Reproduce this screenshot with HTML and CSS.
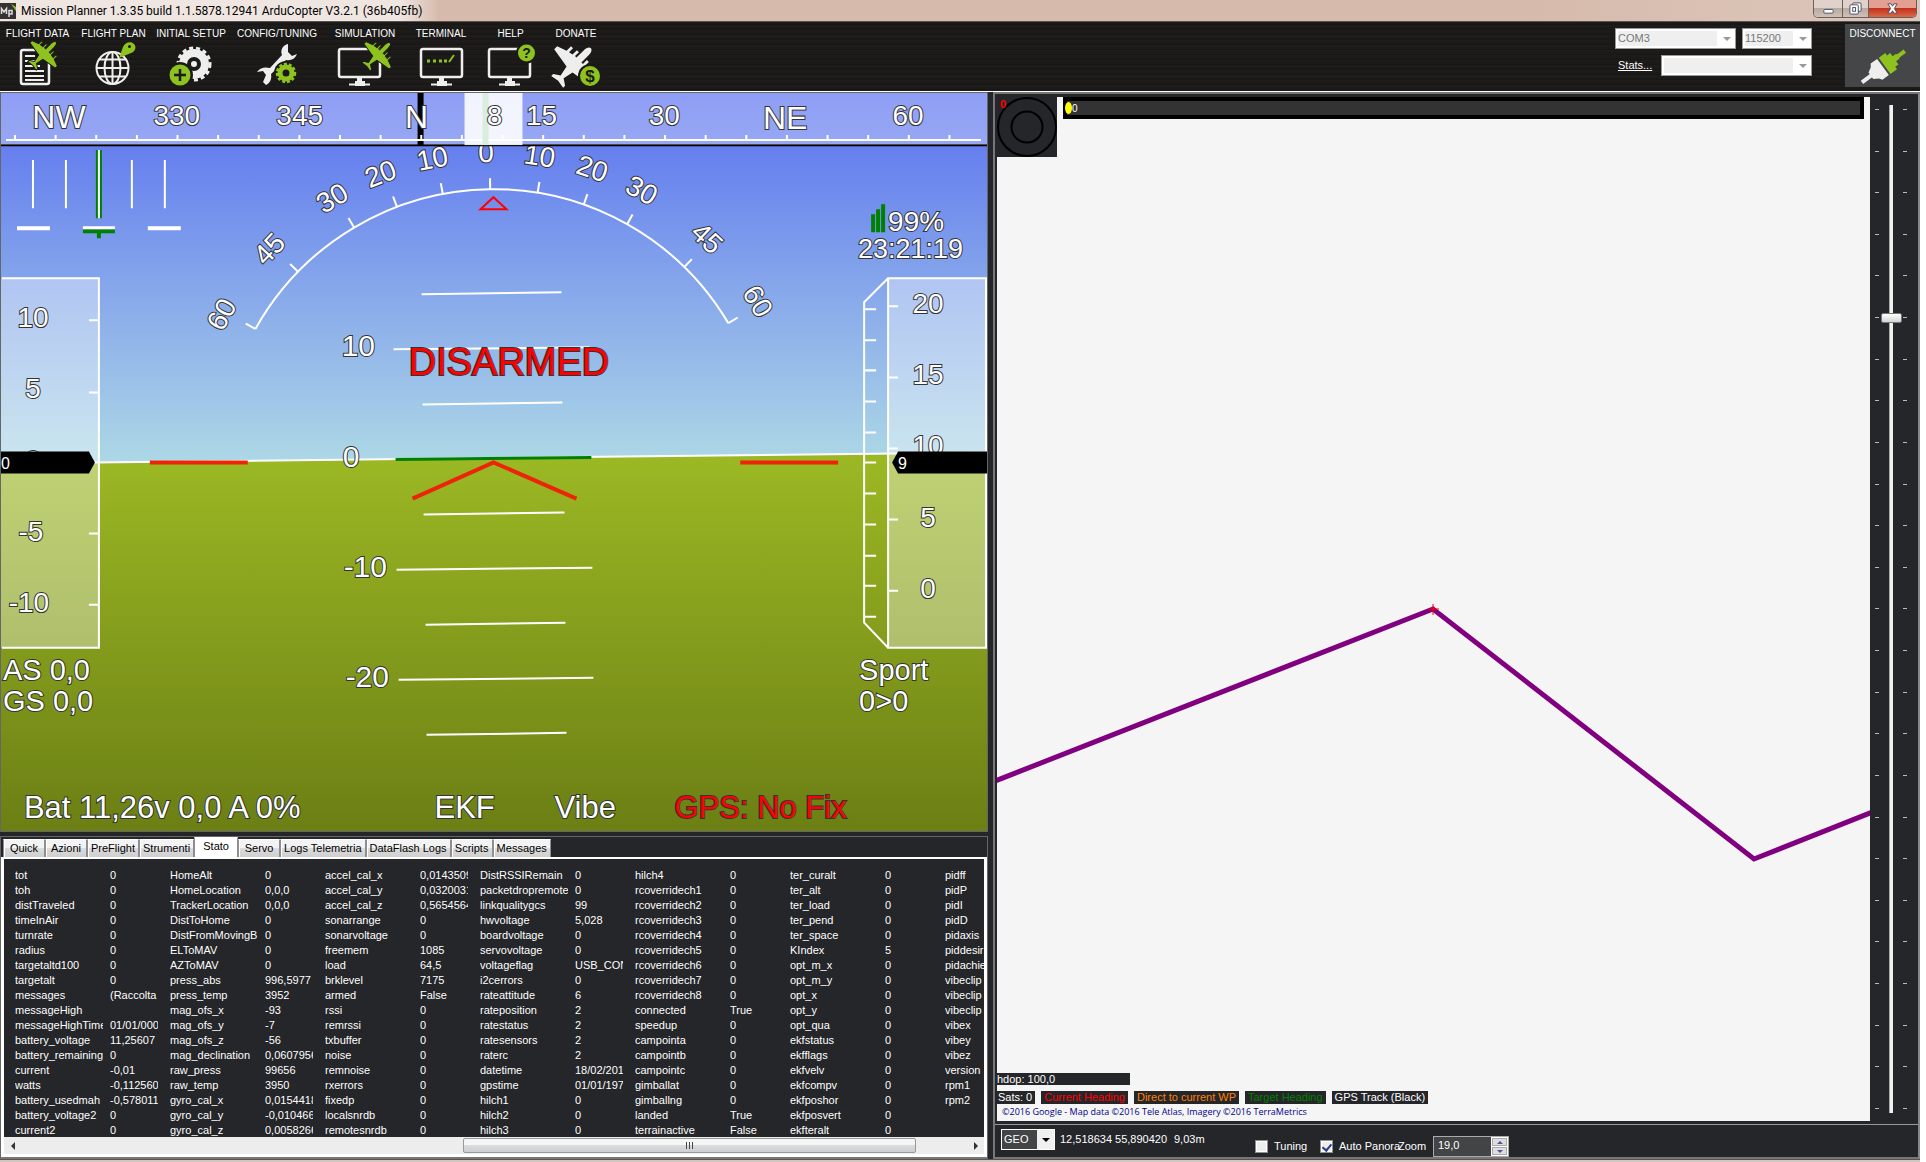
FILE: index.html
```html
<!DOCTYPE html>
<html lang="it">
<head>
<meta charset="utf-8">
<title>Mission Planner</title>
<link rel="stylesheet" href="styles.css">
</head>
<body>
<svg class="defs" aria-hidden="true">
  <defs>
    <path id="plane" d="M0-17C1.500-17 2.500-15 2.500-12V-5L4-5V-9H6V-4.500L9-4V-8H11V-3.500L18-1V2L3 4.500L1.500 12L6 15V17L0 16L-6 17V15L-1.500 12L-3 4.500L-18 2V-1L-11-3.500V-8H-9V-4L-6-4.500V-9H-4V-5H-2.500V-12C-2.500-15-1.500-17 0-17Z"/>
    <g id="monitor" fill="none" stroke="#eee" stroke-width="2.500"><rect x="1" y="1" width="41" height="28" rx="2"/><path d="M17 35.500h10M21.500 30v5" stroke-width="5"/><path d="M11 36.500h21" stroke-width="2"/></g>
  </defs>
</svg>

<header class="titlebar">
  <svg class="app-icon" viewBox="0 0 16 16"><rect width="16" height="16" fill="#333"/><path d="M1.500 11V5.500L4 9l2.500-3.500V11M9 14V7.500h3v3.500H9" fill="none" stroke="#ddd" stroke-width="1.500"/><path d="M11 1l5 7V4z" fill="#8dc21f"/></svg>
  <h1>Mission Planner 1.3.35 build 1.1.5878.12941 ArduCopter V3.2.1 (36b405fb)</h1>
  <div class="winbtns">
    <button class="wb min" aria-label="Minimize"><svg viewBox="0 0 14 14"><rect x="2" y="8" width="10" height="4" rx="1"/></svg></button>
    <button class="wb max" aria-label="Restore"><svg viewBox="0 0 14 14"><rect x="4" y="1" width="9" height="9" rx="1"/><rect x="1" y="3" width="9" height="10" rx="1"/><rect x="4" y="6" width="3" height="4"/></svg></button>
    <button class="wb close" aria-label="Close"><svg viewBox="0 0 14 14"><path d="M2 2h3.500L7 4.500 8.500 2H12L9 7l3 5H8.500L7 9.500 5.500 12H2l3-5z"/></svg></button>
  </div>
</header>

<nav class="menubar">
  <div class="menu">
    <button>FLIGHT DATA
      <svg viewBox="7 39 60 50"><rect x="20" y="49" width="28" height="34" rx="2" fill="none" stroke="#eee" stroke-width="2.500"/><path d="M24 55h10M24 60h12M24 65h15M24 70h19M24 75h19M24 79h19" stroke="#eee" stroke-width="2"/><use href="#plane" transform="translate(43 53) rotate(45)" fill="#8dc21f" stroke="#1b1a19" stroke-width="1"/></svg></button>
    <button>FLIGHT PLAN
      <svg viewBox="83 39 60 50"><g fill="none" stroke="#eee" stroke-width="2"><circle cx="111.500" cy="67" r="16"/><ellipse cx="111.500" cy="67" rx="8" ry="16"/><path d="M111.500 51v32M96 67h31M98 58.500h27M98 75.500h27"/></g><path d="M118 57l4-11c2-5 8-6 11-3s1 8-3 9z" fill="#8dc21f"/><circle cx="128.500" cy="45.500" r="1.500" fill="#1b1a19"/></svg></button>
    <button>INITIAL SETUP
      <svg viewBox="161 39 60 50"><circle cx="194" cy="63" r="11" fill="none" stroke="#eee" stroke-width="8"/><circle cx="194" cy="63" r="16" fill="none" stroke="#eee" stroke-width="3" stroke-dasharray="4 3"/><circle cx="194" cy="63" r="3" fill="#eee"/><circle cx="180" cy="74" r="13" fill="#1b1a19"/><circle cx="180" cy="74" r="10.500" fill="#8dc21f"/><path d="M180 68v12M174 74h12" stroke="#1b1a19" stroke-width="2.500"/></svg></button>
    <button>CONFIG/TUNING
      <svg viewBox="247 39 60 50"><path d="M288 43c-5 1-8 6-6 11L270 67c-5-1-9-1-13 4l6-1 3 4-3 7 3 3c4-2 6-6 5-11L286 59c5 1 9-1 11-6l-5 2-4-4z" fill="#eee"/><circle cx="286" cy="72" r="12" fill="#1b1a19"/><circle cx="286" cy="72" r="6" fill="none" stroke="#8dc21f" stroke-width="5"/><circle cx="286" cy="72" r="9" fill="none" stroke="#8dc21f" stroke-width="2.500" stroke-dasharray="3 2"/></svg></button>
    <button>SIMULATION
      <svg viewBox="335 39 60 50"><use href="#monitor" x="338" y="47"/><use href="#plane" transform="translate(378 54) rotate(45)" fill="#8dc21f" stroke="#1b1a19" stroke-width="1"/></svg></button>
    <button>TERMINAL
      <svg viewBox="411 39 60 50"><use href="#monitor" x="420" y="47"/><path d="M427 60h3M433 60h3M439 60h3M444 60h3" stroke="#8dc21f" stroke-width="3"/><path d="M449 61l5-7" stroke="#8dc21f" stroke-width="2"/></svg></button>
    <button>HELP
      <svg viewBox="480 39 60 50"><use href="#monitor" x="487" y="47"/><circle cx="525.500" cy="52" r="10.500" fill="#1b1a19"/><circle cx="525.500" cy="52" r="8.500" fill="#8dc21f"/><text class="badge" x="525.500" y="57">?</text></svg></button>
    <button>DONATE
      <svg viewBox="546 39 60 50"><use href="#plane" transform="translate(574 64) rotate(45) scale(1.400)" fill="#eee"/><circle cx="590" cy="75" r="12" fill="#1b1a19"/><circle cx="590" cy="75" r="10" fill="#8dc21f"/><text class="badge dollar" x="590" y="81">$</text></svg></button>
  </div>
  <div class="conn">
    <span class="combo port"><select aria-label="Port" disabled><option>COM3</option></select></span>
    <span class="combo baud"><select aria-label="Baud rate" disabled><option>115200</option></select></span>
    <a href="#stats">Stats...</a>
    <span class="combo link"><select aria-label="Link" disabled><option></option></select></span>
  </div>
  <button class="disconnect">DISCONNECT
    <svg viewBox="0 0 60 50"><g transform="translate(30 27) rotate(-36)"><path d="M-26-2h12v4h-12z" fill="#eee"/><path d="M-15-4l5-3 2-3H0V10H-8l-2-3-5-3z" fill="#eee"/><path d="M2-10h8v3h4v4h4l1 1h8v4h-8l-1 1h-4v4h-4v3H2z" fill="#8dc21f"/></g></svg></button>
</nav>

<main>
<div class="left">
  <section class="hud" aria-label="HUD">
  <svg viewBox="1 93 987 737" preserveAspectRatio="none">
    <defs>
      <linearGradient id="sky" gradientUnits="userSpaceOnUse" x1="0" y1="93" x2="0" y2="462"><stop offset="0" stop-color="#5a70f0"/><stop offset="1" stop-color="#add8e6"/></linearGradient>
      <linearGradient id="ground" gradientUnits="userSpaceOnUse" x1="0" y1="458" x2="0" y2="830"><stop offset="0" stop-color="#9bb824"/><stop offset="1" stop-color="#6b7f14"/></linearGradient>
    </defs>
    <path d="M0 90H990V453L0 464Z" fill="url(#sky)"/>
    <path d="M0 463L990 452V832H0Z" fill="url(#ground)"/>
    <path d="M0 463L990 452" stroke="#fff" stroke-width="2"/>

    <g class="line">
      <path d="M422 294L562 292M394 349L590 347M423 404L563 402M424 514L565 512M397 569L593 567M426 624L566 622M399 679L594 677M427 734L567 732"/>
      <path d="M396 459L592 457" stroke="#008000" stroke-width="3"/>
    </g>
    <g class="t30">
      <text x="342" y="356">10</text><text x="343" y="466">0</text><text x="344" y="576">-10</text><text x="346" y="686">-20</text>
    </g>

    <g transform="rotate(-0.700 494 462.400)">
      <path class="arc" d="M257.300 325.700A273.300 273.300 0 0 1 730.700 325.700"/>
      <g class="arc">
        <path id="tk" d="M494 189v-11"/>
        <use href="#tk" transform="rotate(-60 494 462.400)"/><use href="#tk" transform="rotate(-45 494 462.400)"/><use href="#tk" transform="rotate(-30 494 462.400)"/><use href="#tk" transform="rotate(-20 494 462.400)"/><use href="#tk" transform="rotate(-10 494 462.400)"/>
        <use href="#tk" transform="rotate(60 494 462.400)"/><use href="#tk" transform="rotate(45 494 462.400)"/><use href="#tk" transform="rotate(30 494 462.400)"/><use href="#tk" transform="rotate(20 494 462.400)"/><use href="#tk" transform="rotate(10 494 462.400)"/>
      </g>
    </g>
    <g class="t28 mid" transform="rotate(-1.400 494 462.400)">
      <text x="494" y="162">0</text>
      <text x="494" y="162" transform="rotate(-10 494 462.400)">10</text>
      <text x="494" y="162" transform="rotate(-20 494 462.400)">20</text>
      <text x="494" y="162" transform="rotate(-30 494 462.400)">30</text>
      <text x="494" y="162" transform="rotate(-45 494 462.400)">45</text>
      <text x="494" y="162" transform="rotate(-60 494 462.400)">60</text>
      <text x="494" y="162" transform="rotate(10 494 462.400)">10</text>
      <text x="494" y="162" transform="rotate(20 494 462.400)">20</text>
      <text x="494" y="162" transform="rotate(30 494 462.400)">30</text>
      <text x="494" y="162" transform="rotate(45 494 462.400)">45</text>
      <text x="494" y="162" transform="rotate(60 494 462.400)">60</text>
    </g>
    <path d="M494 197L507 209H481Z" fill="none" stroke="#f00" stroke-width="2"/>

    <!-- heading tape -->
    <rect x="0" y="92" width="990" height="54" fill="url(#sky)"/>
    <rect x="0" y="92" width="990" height="53" fill="#fff" fill-opacity=".32"/>
    <path d="M0 144.500H988" stroke="#666" stroke-width="1"/>
    <path d="M0 145.500H988" stroke="#000" stroke-width="1.500"/>
    <rect x="418" y="93" width="6" height="52"/>
    <g class="line">
      <path d="M6 140H982" />
      <path d="M14 137.500H982" stroke-width="5" stroke-dasharray="2 38.670"/>
    </g>
    <rect x="465" y="93" width="58" height="52" fill="#fff" fill-opacity=".88"/>
    <rect x="483" y="93" width="6" height="52" fill="#d9eedd"/>
    <g class="t32 mid"><text x="59" y="128">NW</text><text x="417" y="128">N</text><text x="786" y="129">NE</text></g>
    <g class="t28 mid"><text x="177" y="125">330</text><text x="300" y="125">345</text><text x="495" y="125">8</text><text x="542" y="125">15</text><text x="665" y="125">30</text><text x="909" y="125">60</text></g>

    <!-- vibration / slip -->
    <g class="line"><path d="M33 160v48M66 160v48M132 160v48M165 160v48"/></g>
    <path d="M96 150h6v68h-6zM83 229h32v4H83zM97 233h4v5h-4z" fill="#008000"/>
    <path d="M98 150h2v68h-2zM17 226h33v4H17zM148 226h33v4h-33zM83 226h32v3H83z" fill="#fff"/>

    <!-- speed tape -->
    <rect x="0" y="278" width="99" height="369" fill="#fff" fill-opacity=".36"/>
    <g class="line"><path d="M2 278H99V647H2M89 320H99M89 392H99M89 533H99M89 604H99"/></g>
    <g class="t28 mid"><text x="33" y="327">10</text><text x="33" y="398">5</text><text x="33" y="469">0</text><text x="31" y="540">-5</text><text x="29" y="611">-10</text></g>
    <path d="M0 451H89L95 462L89 473H0Z"/>
    <text class="small" x="1" y="468">0</text>

    <!-- altitude tape -->
    <rect x="889" y="278" width="98" height="369" fill="#fff" fill-opacity=".36"/>
    <g class="line">
      <path d="M987 278H889V647H987ZM889 278L865 302V622L889 647"/>
      <path d="M865 309h12M865 340h12M865 370h12M865 401h12M865 432h12M865 462h12M865 493h12M865 524h12M865 555h12M865 585h12M865 616h12M889 306h10M889 377h10M889 448h10M889 519h10M889 590h10"/>
    </g>
    <g class="t28 mid"><text x="929" y="313">20</text><text x="929" y="384">15</text><text x="929" y="455">10</text><text x="929" y="526">5</text><text x="929" y="597">0</text></g>
    <path d="M988 451H899L893 462L899 473H988Z"/>
    <text class="small" x="899" y="468">9</text>

    <path d="M150 460h98v4h-98zM741 460h98v4h-98z" fill="#ee2408"/>
    <path d="M413 498L494 462L577 498" fill="none" stroke="#ee2408" stroke-width="4"/>

    <path d="M872 214h4v18h-4zM877 209h4v23h-4zM882 204h4v28h-4z" fill="#008000"/>
    <g class="t28"><text x="889" y="231">99%</text></g>
    <g class="t27"><text x="859" y="258">23:21:19</text></g>
    <g class="t29"><text x="3" y="679">AS 0,0</text><text x="3" y="710">GS 0,0</text><text x="860" y="679">Sport</text><text x="860" y="710">0&gt;0</text></g>
    <g class="t31"><text x="24" y="817">Bat 11,26v 0,0 A 0%</text><text x="435" y="817">EKF</text><text x="555" y="817">Vibe</text><text class="alert" x="675" y="817">GPS: No Fix</text></g>
    <text class="t38 alert" x="409" y="375">DISARMED</text>
  </svg>
  </section>

  <section class="tabs">
    <div class="tablist" role="tablist">
      <button role="tab">Quick</button><button role="tab">Azioni</button><button role="tab">PreFlight</button><button role="tab">Strumenti</button><button role="tab" class="on" aria-selected="true">Stato</button><button role="tab">Servo</button><button role="tab">Logs Telemetria</button><button role="tab">DataFlash Logs</button><button role="tab">Scripts</button><button role="tab">Messages</button>
    </div>
    <div class="panel" role="tabpanel">
      <div class="clip">
      <table>
        <colgroup><col class="n"><col class="v"><col class="n"><col class="v"><col class="n"><col class="v"><col class="n"><col class="v"><col class="n"><col class="v"><col class="n"><col class="v"><col class="n"></colgroup>
        <tr><th>tot<td>0<th>HomeAlt<td>0<th>accel_cal_x<td>0,0143509<th>DistRSSIRemain<td>0<th>hilch4<td>0<th>ter_curalt<td>0<th>pidff
        <tr><th>toh<td>0<th>HomeLocation<td>0,0,0<th>accel_cal_y<td>0,0320031<th>packetdropremote<td>0<th>rcoverridech1<td>0<th>ter_alt<td>0<th>pidP
        <tr><th>distTraveled<td>0<th>TrackerLocation<td>0,0,0<th>accel_cal_z<td>0,5654564<th>linkqualitygcs<td>99<th>rcoverridech2<td>0<th>ter_load<td>0<th>pidI
        <tr><th>timeInAir<td>0<th>DistToHome<td>0<th>sonarrange<td>0<th>hwvoltage<td>5,028<th>rcoverridech3<td>0<th>ter_pend<td>0<th>pidD
        <tr><th>turnrate<td>0<th>DistFromMovingB<td>0<th>sonarvoltage<td>0<th>boardvoltage<td>0<th>rcoverridech4<td>0<th>ter_space<td>0<th>pidaxis
        <tr><th>radius<td>0<th>ELToMAV<td>0<th>freemem<td>1085<th>servovoltage<td>0<th>rcoverridech5<td>0<th>KIndex<td>5<th>piddesir
        <tr><th>targetaltd100<td>0<th>AZToMAV<td>0<th>load<td>64,5<th>voltageflag<td>USB_CON<th>rcoverridech6<td>0<th>opt_m_x<td>0<th>pidachie
        <tr><th>targetalt<td>0<th>press_abs<td>996,5977<th>brklevel<td>7175<th>i2cerrors<td>0<th>rcoverridech7<td>0<th>opt_m_y<td>0<th>vibeclip
        <tr><th>messages<td>(Raccolta<th>press_temp<td>3952<th>armed<td>False<th>rateattitude<td>6<th>rcoverridech8<td>0<th>opt_x<td>0<th>vibeclip
        <tr><th>messageHigh<td><th>mag_ofs_x<td>-93<th>rssi<td>0<th>rateposition<td>2<th>connected<td>True<th>opt_y<td>0<th>vibeclip
        <tr><th>messageHighTime<td>01/01/000<th>mag_ofs_y<td>-7<th>remrssi<td>0<th>ratestatus<td>2<th>speedup<td>0<th>opt_qua<td>0<th>vibex
        <tr><th>battery_voltage<td>11,25607<th>mag_ofs_z<td>-56<th>txbuffer<td>0<th>ratesensors<td>2<th>campointa<td>0<th>ekfstatus<td>0<th>vibey
        <tr><th>battery_remaining<td>0<th>mag_declination<td>0,0607956<th>noise<td>0<th>raterc<td>2<th>campointb<td>0<th>ekfflags<td>0<th>vibez
        <tr><th>current<td>-0,01<th>raw_press<td>99656<th>remnoise<td>0<th>datetime<td>18/02/201<th>campointc<td>0<th>ekfvelv<td>0<th>version
        <tr><th>watts<td>-0,112560<th>raw_temp<td>3950<th>rxerrors<td>0<th>gpstime<td>01/01/197<th>gimballat<td>0<th>ekfcompv<td>0<th>rpm1
        <tr><th>battery_usedmah<td>-0,578011<th>gyro_cal_x<td>0,0154418<th>fixedp<td>0<th>hilch1<td>0<th>gimballng<td>0<th>ekfposhor<td>0<th>rpm2
        <tr><th>battery_voltage2<td>0<th>gyro_cal_y<td>-0,010466<th>localsnrdb<td>0<th>hilch2<td>0<th>landed<td>True<th>ekfposvert<td>0<th>
        <tr><th>current2<td>0<th>gyro_cal_z<td>0,0058266<th>remotesnrdb<td>0<th>hilch3<td>0<th>terrainactive<td>False<th>ekfteralt<td>0<th>
      </table>
      </div>
      <div class="hscroll"><span class="arrow l"></span><div class="rail"><div class="thumb"><i></i><i></i><i></i></div></div><span class="arrow r"></span></div>
    </div>
  </section>
</div>

<div class="right">
  <div class="maprow">
    <section class="map" aria-label="Map">
      <svg class="track" viewBox="997 97 873 1024" preserveAspectRatio="none"><path d="M990 783L1433 609L1754 859L1875 811" fill="none" stroke="#800080" stroke-width="5"/><path d="M1433 604v11M1428 609h11" stroke="#f00" stroke-width="1"/></svg>
      <div class="maptop">
        <svg class="wind" viewBox="0 0 60 60"><rect width="60" height="60" fill="#252629"/><circle cx="30" cy="30" r="29" fill="none" stroke="#000" stroke-width="2"/><circle cx="30" cy="30" r="15.500" fill="none" stroke="#000" stroke-width="2"/><text x="3" y="11">0</text></svg>
        <div class="dist"><span class="mark"></span><span>0</span></div>
      </div>
      <div class="mapbot">
        <p class="hdop">hdop: 100,0</p>
        <p class="legend"><span>Sats: 0</span><span class="red">Current Heading</span><span class="orange">Direct to current WP</span><span class="green">Target Heading</span><span>GPS Track (Black)</span></p>
        <p class="copy">©2016 Google - Map data ©2016 Tele Atlas, Imagery ©2016 TerraMetrics</p>
      </div>
    </section>
    <div class="zoombar"><input type="range" aria-label="Map zoom" min="0" max="24" value="19"></div>
  </div>
  <footer class="controls">
    <span class="combo geo"><select aria-label="Coordinate system"><option>GEO</option></select></span>
    <output class="coord">12,518634 55,890420</output><output class="alt">9,03m</output>
    <label class="chk tuning"><input type="checkbox">Tuning</label>
    <label class="chk auto"><input type="checkbox" checked><span>Auto Panora</span></label>
    <label class="zl" for="zoom">Zoom</label>
    <span class="spin"><input id="zoom" type="text" value="19,0"><span class="ud"><button aria-label="Zoom up"></button><button class="dn" aria-label="Zoom down"></button></span></span>
  </footer>
</div>
</main>
<div class="under"></div>
</body>
</html>
```
FILE: styles.css
```css
* { box-sizing: border-box; }
body {
  margin: 0; height: 100vh; padding-right: 6px; background: #fff; overflow: hidden;
  display: flex; flex-direction: column;
  font: 11px/15px "Liberation Sans", Arial, sans-serif; color: #fff;
}
button, select, input { font: inherit; color: inherit; margin: 0; border-radius: 0; }
button { border: 0; padding: 0; background: none; }
p, h1 { margin: 0; }
svg { display: block; }
.defs { position: absolute; width: 0; height: 0; }

.titlebar {
  flex: none; height: 22px; display: flex; align-items: flex-start; padding-right: 3px;
  background: linear-gradient(90deg, #efe6e1 0, #efe6e1 400px, #d6baab 440px, #d6baab 1500px, #dcc7bb 100%);
  border-bottom: 1px solid #5c5350;
}
.app-icon { width: 16px; height: 16px; margin-top: 3px; }
h1 { flex: 1; padding: 2px 0 0 5px; font: 12px/18px Roboto, "Noto Sans", sans-serif; color: #000; }
.winbtns { display: flex; height: 18px; border: 1px solid #6b5f5b; border-top: 0; border-radius: 0 0 5px 5px; overflow: hidden; }
.wb { display: flex; align-items: center; justify-content: center; background: linear-gradient(#e0d2ca 0 45%, #b8a9a1 50%, #cfc0b8); border-right: 1px solid #6b5f5b; }
.wb svg { width: 13px; height: 13px; fill: #fff; stroke: #444c5c; stroke-width: 1; }
.min { width: 29px; }
.max { width: 26px; }
.close { width: 47px; border: 0; background: linear-gradient(#e3a092 0 45%, #c4321a 50%, #d9684c); }

.menubar {
  flex: none; height: 69px; display: flex; padding: 2px 0 4px;
  background: repeating-linear-gradient(#1b1a19 0 2px, #181716 2px 3px, #1e1c1a 3px 5px);
}
.menu { display: grid; grid-template-columns: 75px 77px 78px 94px 82px 70px 69px 62px; flex: 1; }
.menu button, .disconnect { display: flex; flex-direction: column; align-items: center; font-size: 10px; line-height: 12px; padding-top: 4px; white-space: nowrap; }
.menu svg, .disconnect svg { width: 60px; height: 50px; flex: none; }
.badge { font: bold 14px "Liberation Sans", Arial, sans-serif; fill: #1b1a19; text-anchor: middle; }
.dollar { font-size: 17px; }
.conn { display: grid; grid-template-columns: 40px 75px 70px; column-gap: 6px; row-gap: 6px; align-content: start; margin-right: 33px; padding-top: 4px; }
.conn .port { grid-column: 1 / 3; }
.conn .baud { grid-column: 3; }
.conn .link { grid-column: 2 / 4; }
.conn a { color: #fff; padding: 3px 0 0 3px; }
.combo { position: relative; display: block; height: 21px; }
.combo select { appearance: none; width: 100%; height: 100%; border: 1px solid #999; padding: 0 2px; opacity: 1; color: #777; background: linear-gradient(#efefef, #efefef) no-repeat 2px 2px / calc(100% - 20px) 15px #fff; }
.combo::after { content: ""; position: absolute; right: 5px; top: 9px; border: 4px solid transparent; border-top-color: #999; border-bottom: 0; }
.disconnect { width: 75px; background: #454648; }

main { flex: 1; display: grid; grid-template-columns: 991fr 929fr; grid-template-rows: minmax(0, 1fr); background: #252629; border-top: 1px solid #fff; min-height: 0; }
.left { display: flex; flex-direction: column; min-width: 0; min-height: 0; padding-right: 3px; }
.hud { flex: 1; min-height: 0; border: 1px solid #666; position: relative; }
.hud > svg { position: absolute; inset: 0; width: 100%; height: 100%; font-family: "Liberation Sans", Arial, sans-serif; }
.line { fill: none; stroke: #fff; stroke-width: 2; }
.arc { fill: none; stroke: #fff; stroke-width: 2; }
.hud text { fill: #fff; stroke: #333; stroke-width: 2px; paint-order: stroke; }
.hud .small { font-size: 16px; stroke: none; }
.hud .alert { fill: #f00; }
.mid { text-anchor: middle; }
.t27 { font-size: 27px; }
.t28 { font-size: 28px; }
.t29 { font-size: 29px; }
.t30 { font-size: 30px; }
.t31 { font-size: 31px; }
.t32 { font-size: 32px; }
.t38 { font-size: 38px; }

.tabs { flex: none; margin-top: 4px; border: 1px solid #666; border-bottom: 2px solid #777; }
.tablist { height: 20px; display: flex; align-items: flex-end; padding-left: 2px; }
.tablist button { height: 18px; min-width: 42px; padding: 0 3px; color: #000; white-space: nowrap; background: linear-gradient(#f3f3f3 0 45%, #dcdcdc 50%, #cfcfcf); border: 1px solid #8c8e94; border-top-color: #fff; border-bottom: 0; box-shadow: inset 1px 0 #fff; }
.tablist .on { height: 20px; min-width: 44px; padding-bottom: 3px; background: #fff; }
.panel { border: 3px solid #fff; border-top-width: 2px; }
.clip { height: 278px; padding: 9px 0 0 11px; overflow: hidden; }
table { table-layout: fixed; width: 1025px; border-collapse: separate; border-spacing: 0; }
.n { width: 95px; }
.v { width: 60px; }
th, td { height: 15px; padding: 0; font-weight: normal; text-align: left; line-height: 15px; white-space: nowrap; overflow: hidden; border-right: 7px solid transparent; }
td { border-right-width: 12px; }
.hscroll { height: 17px; display: flex; align-items: center; background: #ededed; color: #333; }
.arrow { width: 17px; display: flex; justify-content: center; }
.arrow::before { content: ""; border: 4px solid transparent; border-left: 0; border-right-color: #333; }
.arrow.r::before { border: 4px solid transparent; border-right: 0; border-left-color: #333; }
.rail { flex: 1; height: 15px; padding: 0 51px 0 442px; }
.thumb { height: 15px; border: 1px solid #999; border-radius: 2px; display: flex; gap: 2px; justify-content: center; align-items: center; background: linear-gradient(#f5f5f5 0 45%, #dadbdd 50%, #cdced1); }
.thumb i { width: 1px; height: 7px; background: #444; }

.right { display: flex; flex-direction: column; min-width: 0; min-height: 0; margin-left: 2px; border: 2px solid #777; border-right-color: #888; }
.maprow { flex: 1; display: flex; padding: 3px 0 3px 2px; min-height: 0; }
.map { flex: 1; position: relative; display: flex; flex-direction: column; justify-content: space-between; background: #f5f5f5; min-width: 0; }
.track { position: absolute; inset: 0; width: 100%; height: 100%; }
.maptop { display: flex; position: relative; align-items: flex-start; gap: 6px; padding-right: 6px; }
.wind { width: 60px; height: 60px; }
.wind text { font: bold 11px "Liberation Sans", Arial, sans-serif; fill: #f00; }
.dist { flex: 1; height: 22px; border: 4px solid #000; background: #333; display: flex; align-items: center; font-size: 10px; }
.mark { width: 7px; height: 12px; margin-left: -2px; border-radius: 50%; background: #ff0; }
.mapbot { position: relative; padding-bottom: 2px; }
.mapbot p { width: max-content; line-height: 13px; white-space: nowrap; }
.mapbot .hdop { width: 133px; background: #252629; line-height: 12px; margin-bottom: 6px; }
.legend { display: flex; gap: 6px; }
.legend span { background: #252629; padding: 0 3px; }
.legend span:first-child { padding-left: 1px; }
.legend .red { color: #f00; }
.legend .orange { color: #ff8000; }
.legend .green { color: #008000; }
.mapbot .copy { font: 9px/15px "Open Sans", "Noto Sans", sans-serif; color: #00008b; padding-left: 5px; }
.zoombar { width: 48px; padding: 8px 0; display: flex; justify-content: center; position: relative; }
.zoombar::before, .zoombar::after { content: ""; position: absolute; top: 12px; bottom: 12px; width: 4px; background: repeating-linear-gradient(#bbb 0 1px, transparent 1px calc((100% - 1px) / 24)); }
.zoombar::before { left: 5px; }
.zoombar::after { left: 33px; }
.zoombar input { appearance: none; writing-mode: vertical-lr; direction: rtl; width: 21px; height: 100%; background: linear-gradient(90deg, #aaa 1px, #f0f0f0 1px) center / 4px 100% no-repeat; margin-right: 6px; }
.zoombar input::-webkit-slider-thumb { appearance: none; width: 21px; height: 10px; border: 1px solid #777; border-radius: 2px; background: linear-gradient(#fff, #d4d4d4); }

.controls { flex: none; height: 33px; display: flex; align-items: flex-start; border-top: 1px solid #999; padding: 4px 0 0 6px; white-space: nowrap; }
.geo { width: 54px; }
.geo select { color: #fff; border: 1px solid #fff; background: linear-gradient(#434446, #434446) no-repeat 0 0 / calc(100% - 17px) 100% #f0f0f0; }
.geo::after { border-top-color: #000; }
.coord { width: 113px; padding: 3px 0 0 5px; }
.alt { width: 75px; padding: 3px 0 0 6px; }
.chk { display: flex; align-items: center; gap: 6px; padding-top: 10px; }
.chk input { flex: none; appearance: none; width: 13px; height: 13px; border: 1px solid #8e8f8f; background: #eee; box-shadow: inset 0 0 0 1px #fff; position: relative; }
.chk input:checked::after { content: ""; position: absolute; left: 3px; top: 1px; width: 4px; height: 7px; border: solid #2b3c8f; border-width: 0 2px 2px 0; transform: rotate(40deg); }
.tuning { width: 65px; margin-left: 12px; }
.auto { width: 78px; }
.zl { width: 35px; padding-top: 10px; }
.spin { display: flex; width: 76px; height: 21px; margin-top: 7px; border: 1px solid #aaa; background: #434446; }
.spin input { flex: 1; min-width: 0; border: 0; padding: 0 4px 3px; background: none; }
.ud { display: grid; width: 17px; gap: 1px; background: #fff; border: 1px solid #fff; }
.ud button { display: flex; align-items: center; justify-content: center; background: #ddd; border: 1px solid #aaa; }
.ud button::before { content: ""; border: 3px solid transparent; border-top: 0; border-bottom-color: #46549a; }
.ud .dn::before { border: 3px solid transparent; border-bottom: 0; border-top-color: #46549a; }
.under { flex: none; height: 3px; background: #d3c6bd; border-top: 1px solid #555; }
```
